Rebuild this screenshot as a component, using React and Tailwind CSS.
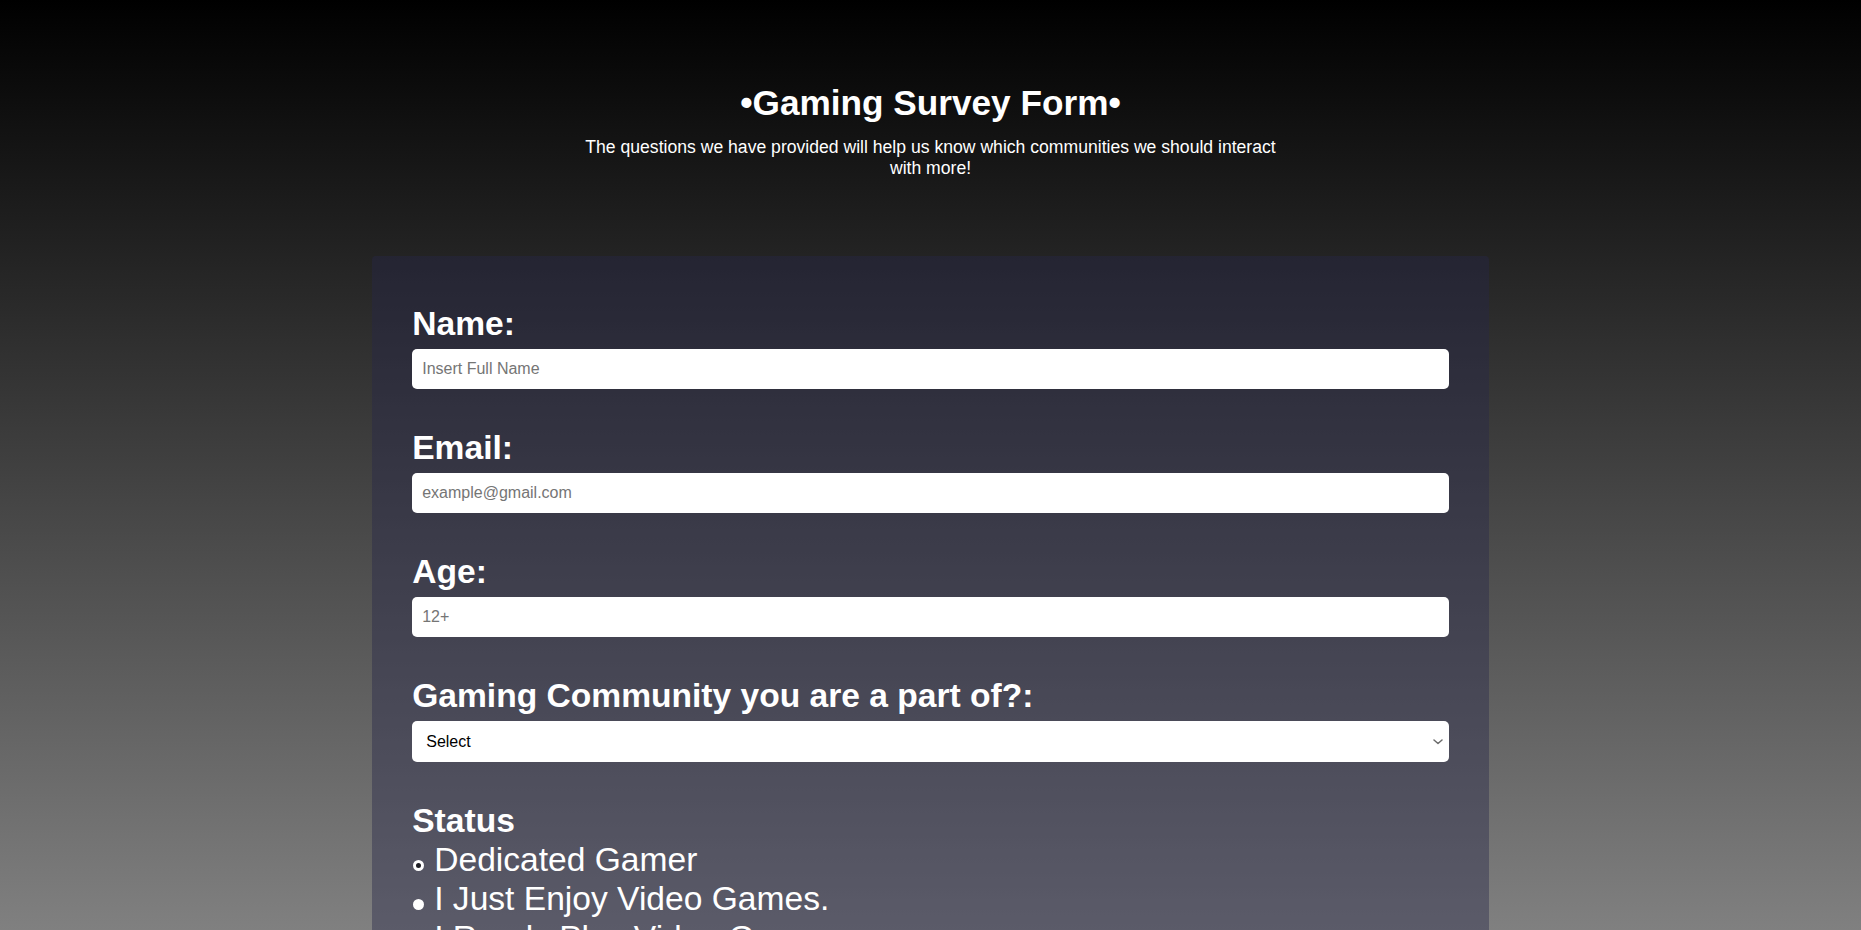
import React from "react";

export default function App() {
  const groups = [
    { id: "name", label: "Name:", type: "text", placeholder: "Insert Full Name" },
    { id: "email", label: "Email:", type: "email", placeholder: "example@gmail.com" },
    { id: "age", label: "Age:", type: "number", placeholder: "12+" },
  ];
  const statuses = [
    "Dedicated Gamer",
    "I Just Enjoy Video Games.",
    "I Rarely Play Video Games.",
  ];
  return (
    <div className="min-h-screen bg-[linear-gradient(to_bottom,#000000,#808080)] bg-fixed font-['Liberation_Sans',Arial,sans-serif] text-white pb-20">
      <header className="pt-[83px] text-center">
        <h1 className="text-[35.2px] font-bold leading-[normal]">•Gaming Survey Form•</h1>
        <p className="mx-auto mt-[14px] max-w-[710px] text-[17.6px] leading-[normal]">
          The questions we have provided will help us know which communities we should interact with more!
        </p>
      </header>

      <form className="mx-auto mt-[77px] w-[60%] rounded-[4px] bg-[rgba(40,40,73,0.41)] px-10 pt-[48px] pb-10">
        {groups.map((g) => (
          <div key={g.id} className="mb-[39px] flex flex-col">
            <label htmlFor={g.id} className="mb-[6px] text-[33.6px] font-bold leading-[39px]">
              {g.label}
            </label>
            <input
              id={g.id}
              type={g.type}
              placeholder={g.placeholder}
              className="h-10 w-full rounded-[5px] bg-white pl-[10px] text-[16px] text-black placeholder:text-[#757575] outline-none"
            />
          </div>
        ))}

        <div className="mb-[39px] flex flex-col">
          <label htmlFor="community" className="mb-[6px] text-[33.6px] font-bold leading-[39px]">
            Gaming Community you are a part of?:
          </label>
          <div className="relative">
            <select
              id="community"
              defaultValue="select"
              className="h-[41px] w-full appearance-none rounded-[5px] bg-white pl-[14px] pr-[24px] text-[16px] text-black outline-none"
            >
              <option value="select">Select</option>
              <option value="pc">PC</option>
              <option value="console">Console</option>
              <option value="mobile">Mobile</option>
            </select>
            <svg
              className="pointer-events-none absolute right-[6px] top-1/2 -translate-y-1/2"
              width="10"
              height="6"
              viewBox="0 0 10 6"
              fill="none"
            >
              <path d="M1 1l4 3.5L9 1" stroke="#6b6b6b" strokeWidth="1.5" strokeLinecap="round" strokeLinejoin="round" />
            </svg>
          </div>
        </div>

        <div className="flex flex-col">
          <p className="text-[33.6px] font-bold leading-[39px]">Status</p>
          {statuses.map((s, i) => (
            <label key={s} className="flex items-start text-[33.6px] leading-[39px]">
              <input
                type="radio"
                name="status"
                defaultChecked={i === 0}
                className="mt-[20px] ml-[1px] mr-[10px] h-[11px] w-[11px] shrink-0 appearance-none rounded-full bg-white checked:border-[3px] checked:border-white checked:bg-[#1e1e24]"
              />
              <span>{s}</span>
            </label>
          ))}
        </div>
      </form>
    </div>
  );
}
